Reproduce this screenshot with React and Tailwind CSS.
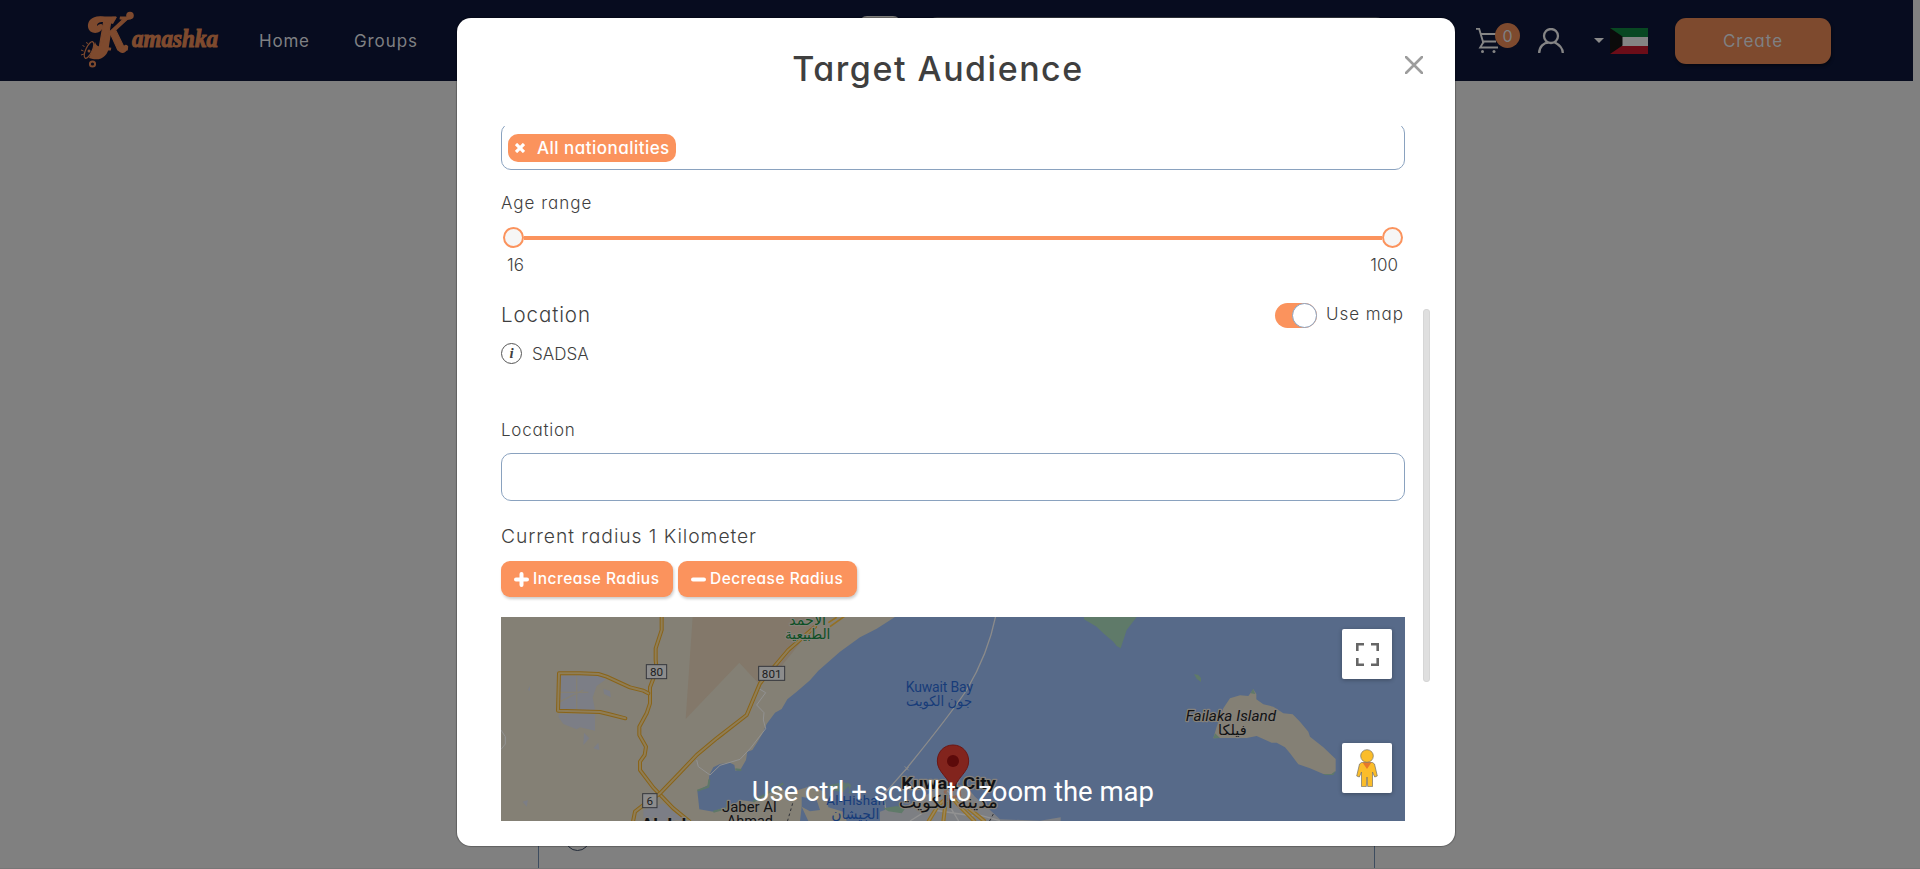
import React from "react";

function Logo() {
  return (
    <svg className="h-[70px] w-[155px]" viewBox="0 0 155 70" fill="none" aria-label="Kamashka">
      <g fill="#7e4a2e" stroke="#7e4a2e" fontFamily="Liberation Serif, serif" fontWeight="700" fontStyle="italic">
        <text x="23" y="46" fontSize="50" strokeWidth="1.2" textLength="33" lengthAdjust="spacingAndGlyphs">K</text>
        <text x="60" y="43" fontSize="24.500" strokeWidth="1.1" textLength="86" lengthAdjust="spacingAndGlyphs">amashka</text>
      </g>
      <path d="M33 13C22 10 15 16 16 23C17 31 30 31 31 22C30 19 27 20 25 22C25 17 32 17 41 20L45 13C41 12 38 14 33 13Z" fill="#7e4a2e" />
      <circle cx="58" cy="11.500" r="3.800" fill="#7e4a2e" />
      <path d="M37 42C36 53 28 58 17 54L23 38C26 46 31 42 33 32L39 29Z" fill="#7e4a2e" />
      <path d="M47 44q4 6 7 -1" stroke="#7e4a2e" strokeWidth="4.500" strokeLinecap="round" />
      <ellipse cx="17" cy="46" rx="3.200" ry="9" transform="rotate(25 17 46)" stroke="#7e4a2e" strokeWidth="1.200" fill="#070c1f" />
      <circle cx="17" cy="47" r="1.500" fill="#7e4a2e" />
      <path d="M9 51l3 -1M9 46l2.500 1M10.500 41l2 2M14.500 38l1 2" stroke="#7e4a2e" strokeWidth="1" />
      <circle cx="20.500" cy="60" r="2.600" stroke="#7e4a2e" strokeWidth="2" />
    </svg>
  );
}

function Cart() {
  return (
    <svg className="h-[25px] w-[24px]" viewBox="0 0 24 25" fill="none" stroke="#858585" strokeWidth="1.900">
      <path d="M0 .9H3.200L7.500 15.500M4.600 6H22M6 13.500H20M7.500 14L4.200 19.500H22" />
      <circle cx="6.500" cy="23.500" r="1.500" fill="#858585" stroke="none" />
      <circle cx="18" cy="23.500" r="1.500" fill="#858585" stroke="none" />
    </svg>
  );
}

function Header() {
  return (
    <header className="flex h-[81px] w-[1913px] bg-[#070c1f] text-[17px] text-[#7f8083]">
      <div className="ml-[72px] mt-[4px]"><Logo /></div>
      <nav className="flex h-[81px] items-center pt-[2px]">
        <a className="ml-[32px] w-[95px] tracking-[0.8px]">Home</a>
        <a className="tracking-[0.9px]">Groups</a>
      </nav>
      <div className="ml-auto mr-[82px] flex h-full">
        <div className="relative mt-[28px] h-[26px] w-[62px]">
          <Cart />
          <span className="absolute left-[19px] top-[-5px] flex h-[25px] w-[25px] items-center justify-center rounded-full bg-[#7e4a2e] text-[16px]">0</span>
        </div>
        <svg className="mt-[28px] h-[25px] w-[26px]" viewBox="0 0 26 25" fill="none" stroke="#858585" strokeWidth="2.300">
          <circle cx="13" cy="8" r="7" />
          <path d="M1.200 25C1.200 18.500 6 14.600 10.500 14.600M24.800 25C24.800 20 21 16.500 16.500 14.200" />
        </svg>
        <svg className="ml-[30px] mt-[38px] h-[5px] w-[10px]" viewBox="0 0 10 5"><path d="M0 0H10L5 5Z" fill="#8a8a8a" /></svg>
        <svg className="ml-[6px] mt-[28px] h-[26px] w-[38px]" viewBox="0 0 38 26">
          <path d="M0 0H38V9H0Z" fill="#084722" />
          <path d="M0 9H38V18H0Z" fill="#848484" />
          <path d="M0 18H38V26H0Z" fill="#6b0d18" />
          <path d="M0 0L12.500 8.500V17.500L0 26Z" fill="#0b0b0b" />
        </svg>
        <button className="ml-[27px] mt-[18px] h-[46px] w-[156px] rounded-[11px] bg-[#7e4a2e] pt-[2px] tracking-[1px] shadow-[1px_2px_3px_rgba(0,0,0,0.4)]">Create</button>
      </div>
    </header>
  );
}

/* Road drawn as a dark casing with a lighter core. */
function Road({ d, w = 12 }) {
  return (
    <>
      <path d={d} stroke="#8a6419" strokeWidth={w} fill="none" strokeLinejoin="round" strokeLinecap="round" />
      <path d={d} stroke="#8f7d55" strokeWidth={w - 6} fill="none" strokeLinejoin="round" strokeLinecap="round" />
    </>
  );
}

function Shield({ x, y, w, label }) {
  return (
    <g>
      <rect x={x} y={y} width={w} height="42" fill="#8c8c8c" stroke="#35373c" strokeWidth="3" />
      <text x={x + w / 2} y={y + 34} fontSize="35" fill="#1c1d20" textAnchor="middle">{label}</text>
    </g>
  );
}

function MapArt() {
  const halo = { stroke: "#85817a", strokeWidth: 7, paintOrder: "stroke", strokeLinejoin: "round" };
  return (
    <svg className="block h-[204px] w-[904px]" viewBox="3 21 2712 612" fontFamily="Roboto, 'DejaVu Sans', sans-serif" fontWeight="400">
      <rect x="3" y="21" width="2712" height="612" fill="#576a89" />
      <path d="M3 21H1185L1130 56L1080 82L1020 125L955 182L930 211L890 245L862 268L845 297L825 308L800 342L785 375L770 400L757 420L742 425L738 450L722 478L706 482L703 465L690 458L660 462L640 472L628 495L625 525L592 542L598 598L640 605L665 595L690 592L720 570L760 575L800 552L840 535L870 548L925 530L975 548L980 590L960 600L930 604L905 590L900 633H3Z" fill="#848075" />
      <path d="M925 527L975 545L985 592L1030 605L1040 633H925L905 590Z" fill="#848075" />
      <path d="M905 560L950 570L960 600L930 604L905 590Z" fill="#576a89" />
      <path d="M578 21H930L958 21L900 100L835 180L775 220L718 158L557 327Z" fill="#83786a" />
      <g fill="#7c7e86">
        <path d="M180 197L295 195L318 208L290 228L278 262L285 300H180Z" />
        <path d="M178 312H285V362L240 352L230 358L190 342L175 320Z" />
        <path d="M310 236L330 243L333 262L312 252ZM252 368L268 385L250 405ZM280 415L295 398L298 420ZM83 240L90 228V242ZM68 575L84 570L80 590Z" />
        <path d="M430 600L490 580L530 612L560 633H430Z" />
      </g>
      <path d="M180 247H265M230 200V300M180 275L250 240" stroke="#848075" strokeWidth="4" />
      <path d="M775 235L797 248L770 285L792 308L790 330L797 356L752 414L720 448L660 466L630 495L595 470L590 450M3 360L16 380V402L3 418" stroke="#929292" strokeWidth="3" fill="none" />
      <path d="M592 542L625 530L628 508M640 605L690 592M760 575L850 520M706 478L724 480" stroke="#5e7868" strokeWidth="6" fill="none" />
      <Road d="M485 15V60L467 115V150L470 180L450 232V280L440 310L418 350V375L438 410L434 435L420 455V480L460 533L520 595L575 640" />
      <Road d="M945 50L865 120L780 220L740 315L650 385L590 435L540 488L480 550L440 578L405 605L398 640" />
      <Road d="M445 250L430 242L390 232L320 200L295 192L240 190H177L174 302L300 306L325 312L376 325" />
      <path d="M990 50L1035 18M985 38L1010 22" stroke="#947023" strokeWidth="5" />
      <Shield x={439} y={164} w={61} label="80" />
      <Shield x={776} y={169} w={78} label="801" />
      <Shield x={428} y={551} w={43} label="6" />

      <path d="M1752 21H1910L1880 60L1862 115L1850 108L1840 95L1810 70L1790 50L1752 28Z" fill="#5f7a69" />
      <path d="M2082 193L2094 194L2103 203V216L2090 206Z" fill="#5f7a69" />
      <path d="M2140 385L2150 350L2170 295L2190 265L2220 256L2245 258L2260 238L2269 252V268L2290 283L2320 290L2350 310L2378 313L2400 335L2425 365L2430 380L2470 412L2507 447V484L2495 492H2470L2430 475L2395 463L2370 430L2355 412L2330 398H2315L2270 378L2240 384H2160Z" fill="#848075" />
      <path d="M2140 385L2145 370L2160 384ZM2252 250L2259 236L2266 252ZM2192 262L2210 254M2470 492H2495L2507 482L2500 495H2475Z" fill="#5f7a69" />

      <path d="M1487 18Q1465 130 1400 240Q1350 315 1220 475L1150 555L1158 600L1185 635" stroke="#8b8b8b" strokeWidth="4" fill="none" />
      <path d="M1214 469l12 12m0 -10l-12 12" stroke="#8b8b8b" strokeWidth="3" />
      <path d="M977 528L1030 516L1048 524L1030 545L1055 552L1040 516L1054 525L1046 548L1000 542Z" fill="#5f7a69" opacity=".8" />
      <path d="M1140 605L1160 598L1215 590L1270 560L1320 530L1350 520L1400 530L1425 560L1470 600L1500 628L1620 632L1682 622V640H1140Z" fill="#7d7f83" />
      <path d="M1150 595L1190 588L1216 595L1205 610L1165 604Z" fill="#5f7a69" />
      <path d="M1330 530L1370 570L1420 610L1500 632M1230 633L1330 570M1380 640L1350 590M1300 600L1420 618" stroke="#929292" strokeWidth="4" fill="none" />
      <path d="M1285 635L1315 585L1345 560M1330 635L1337 575M1425 635L1375 585L1355 560M1455 635L1400 590" stroke="#947023" strokeWidth="12" fill="none" />
      <path d="M1285 635L1315 585L1345 560M1330 635L1337 575M1425 635L1375 585L1355 560M1455 635L1400 590" stroke="#9a8659" strokeWidth="5" fill="none" />
      <path d="M1355 515L1335 545L1340 570L1380 555L1376 525" stroke="#8d6a58" strokeWidth="8" fill="none" />
      <path d="M878 580L862 635M1480 612L1465 640" stroke="#303238" strokeWidth="3" strokeDasharray="8 8" />

      <g fill="#0d4f24" {...halo} textAnchor="middle" fontFamily="'DejaVu Sans', sans-serif">
        <text x="923" y="46" fontSize="42" textLength="110" lengthAdjust="spacingAndGlyphs">الأحمد</text>
        <text x="923" y="87" fontSize="42" textLength="136" lengthAdjust="spacingAndGlyphs">الطبيعية</text>
      </g>
      <g fill="#173c79">
        <text x="1217" y="246" fontSize="42" textLength="202">Kuwait Bay</text>
        <text x="1317" y="287" fontSize="42" textAnchor="middle" textLength="198" lengthAdjust="spacingAndGlyphs">جون الكويت</text>
        <text x="979" y="586" fontSize="40" textLength="176">Al-Hishan</text>
        <text x="1066" y="628" fontSize="42" textAnchor="middle" textLength="145" lengthAdjust="spacingAndGlyphs">الجيشان</text>
      </g>
      <g fill="#111214" {...halo}>
        <text x="2057" y="333" fontSize="43" fontStyle="italic" textLength="271" lengthAdjust="spacingAndGlyphs">Failaka Island</text>
        <text x="2197" y="376" fontSize="43" textAnchor="middle" textLength="86" lengthAdjust="spacingAndGlyphs">فيلكا</text>
        <text x="1204" y="538" fontSize="50" fontWeight="700" textLength="284" lengthAdjust="spacingAndGlyphs">Kuwait City</text>
        <text x="1345" y="594" fontSize="53" textAnchor="middle" textLength="298" lengthAdjust="spacingAndGlyphs">مدينة الكويت</text>
        <text x="666" y="606" fontSize="44" textLength="164" lengthAdjust="spacingAndGlyphs">Jaber Al</text>
        <text x="680" y="649" fontSize="42" textLength="139" lengthAdjust="spacingAndGlyphs">Ahmad</text>
        <text x="424" y="659" fontSize="50" fontWeight="700" textLength="198" lengthAdjust="spacingAndGlyphs">Al Jahra</text>
      </g>
      <path d="M1359 405C1331 405 1312 427 1312 453C1312 488 1347 500 1359 543C1371 500 1406 488 1406 453C1406 427 1387 405 1359 405Z" fill="#82241d" stroke="#6c1714" strokeWidth="3" />
      <circle cx="1359" cy="453" r="18" fill="#5c0a0a" />
      <text x="755" y="573" fontSize="83" fill="#fff" textLength="1207" lengthAdjust="spacingAndGlyphs">Use ctrl + scroll to zoom the map</text>
    </svg>
  );
}

function MapPanel() {
  return (
    <div className="relative mt-[20px] h-[204px] w-[904px]">
      <MapArt />
      <button className="absolute right-[13px] top-[12px] flex h-[50px] w-[50px] items-center justify-center rounded-[2px] bg-white shadow-[0_1px_4px_rgba(0,0,0,0.3)]">
        <svg className="h-[23px] w-[23px]" viewBox="0 0 23 23" fill="none" stroke="#666" strokeWidth="2.600">
          <path d="M1.300 8V1.300H8M15 1.300H21.700V8M21.700 15V21.700H15M8 21.700H1.300V15" />
        </svg>
      </button>
      <button className="absolute right-[13px] top-[126px] flex h-[50px] w-[50px] items-center justify-center rounded-[2px] bg-white shadow-[0_1px_4px_rgba(0,0,0,0.3)]">
        <svg className="h-[38px] w-[22px]" viewBox="0 0 22 38" fill="#fbbd2a" stroke="#73706a" strokeWidth=".7">
          <path d="M5.500 13.500L3.500 15L.7 27L3.300 28L5.500 23V37.600H10.300L11 28L11.700 37.600H16.500V23L18.700 28L21.300 27L18.500 15L16.500 13.500Z" />
          <path d="M6.500 13.500H15.500L11 20Z" fill="#e7792b" stroke="none" />
          <circle cx="11" cy="7" r="6.300" />
        </svg>
      </button>
    </div>
  );
}

function Modal() {
  return (
    <section className="absolute left-[457px] top-[18px] flex h-[828px] w-[998px] flex-col rounded-[14px] bg-white text-[17px] font-light text-[#3f3f3f] shadow-[0_0_1px_1px_rgba(0,0,0,0.25)]">
      <div className="relative h-[108px] pt-[31px] text-center">
        <h2 className="pr-[36px] text-[34px] font-medium leading-[40px] tracking-[1.5px]">Target Audience</h2>
        <svg className="absolute right-[32px] top-[38px] h-[18px] w-[18px]" viewBox="0 0 18 18" stroke="#9d9d9d" strokeWidth="2.600" strokeLinecap="round">
          <path d="M1 1L17 17M17 1L1 17" />
        </svg>
      </div>
      <div className="flex h-[695px] overflow-hidden pl-[44px]">
        <div className="w-[904px]">
          <div className="-mt-[3px] h-[47px] rounded-[10px] border border-[#8aa2bf] pl-[6px] pt-[10px]">
            <span className="flex h-[28px] w-[168px] items-center rounded-[10px] bg-[#fb935d] pl-[7px] font-medium text-white">
              <svg className="mr-[12px] h-[10px] w-[10px]" viewBox="0 0 10 10" stroke="#fff" strokeWidth="3.200"><path d="M1 1L9 9M9 1L1 9" /></svg>
              <span className="whitespace-nowrap pt-[2px] tracking-[0.47px]">All nationalities</span>
            </span>
          </div>
          <div className="mt-[21px] h-[24px] leading-[24px] tracking-[1px]">Age range</div>
          <div className="mt-[12px] flex h-[21px] items-center pl-[2px] pr-[2px]">
            <span className="h-[21px] w-[21px] rounded-full border-2 border-[#fb935d] bg-[#f6f6f6]" />
            <span className="h-[4px] flex-1 bg-[#fb935d]" />
            <span className="h-[21px] w-[21px] rounded-full border-2 border-[#fb935d] bg-[#f6f6f6]" />
          </div>
          <div className="mt-[5px] flex h-[24px] justify-between pl-[6px] pr-[7px] leading-[24px]"><span>16</span><span>100</span></div>
          <div className="mt-[23px] flex h-[30px] items-center">
            <span className="text-[20.500px] tracking-[0.9px]">Location</span>
            <span className="ml-auto flex h-[25px] w-[42px] justify-end rounded-full bg-[#fb935d]">
              <span className="h-[25px] w-[25px] rounded-full border border-[#8aa2bf] bg-white" />
            </span>
            <span className="ml-[9px] w-[79px] whitespace-nowrap pb-[1px] leading-[27px] tracking-[0.95px]">Use map</span>
          </div>
          <div className="mt-[11px] flex h-[24px] items-center">
            <span className="flex h-[21px] w-[21px] items-center justify-center rounded-full border border-[#555] font-['Liberation_Serif',serif] text-[15px] font-bold italic">i</span>
            <span className="ml-[10px] pt-[3px]">SADSA</span>
          </div>
          <div className="mt-[53px] h-[24px] leading-[24px] tracking-[0.75px]">Location</div>
          <div className="mt-[11px] h-[48px] rounded-[10px] border border-[#8aa2bf]" />
          <div className="mt-[21px] h-[28px] text-[19.300px] leading-[28px] tracking-[0.93px]">Current radius 1 Kilometer</div>
          <div className="mt-[11px] flex gap-[5px] text-[15.500px] font-medium tracking-[0.5px] text-white">
            <button className="flex h-[36px] w-[172px] items-center rounded-[9px] bg-[#fb935d] pl-[13px] shadow-[1px_2px_3px_rgba(0,0,0,0.2)]">
              <svg className="mr-[4px] h-[15px] w-[15px]" viewBox="0 0 15 15" stroke="#fff" strokeWidth="4" strokeLinecap="round"><path d="M2 7.500H13M7.500 2V13" /></svg>
              <span className="whitespace-nowrap">Increase Radius</span>
            </button>
            <button className="flex h-[36px] w-[179px] items-center rounded-[9px] bg-[#fb935d] pl-[13px] shadow-[1px_2px_3px_rgba(0,0,0,0.2)]">
              <svg className="mr-[4px] h-[15px] w-[15px]" viewBox="0 0 15 15" stroke="#fff" strokeWidth="4" strokeLinecap="round"><path d="M2 7.500H13" /></svg>
              <span className="whitespace-nowrap">Decrease Radius</span>
            </button>
          </div>
          <MapPanel />
        </div>
        <div className="ml-[18px] mt-[183px] h-[373px] w-[7px] rounded-[3px] border border-[#d6d6d6] bg-[#dfdfdf]" />
      </div>
    </section>
  );
}

export default function App() {
  return (
    <main className="relative flex h-[869px] w-full flex-col overflow-hidden bg-[#808080] font-['Inter',sans-serif] [font-feature-settings:'cv11']">
      <Header />
      <div className="absolute left-[859px] top-[16px] h-[20px] w-[42px] rounded-[8px] bg-[#807f7c]" />
      <div className="absolute left-[929px] top-[17px] h-[20px] w-[455px] rounded-[8px] bg-[#3c4048]" />
      <div className="ml-[538px] mt-auto h-[100px] w-[837px] border-x border-[#3d4c5f] pl-[26px] pt-[58px]">
        <div className="h-[25px] w-[25px] rounded-full border border-[#222a38]" />
      </div>
      <div className="h-px w-full bg-[#777]" />
      <Modal />
    </main>
  );
}
